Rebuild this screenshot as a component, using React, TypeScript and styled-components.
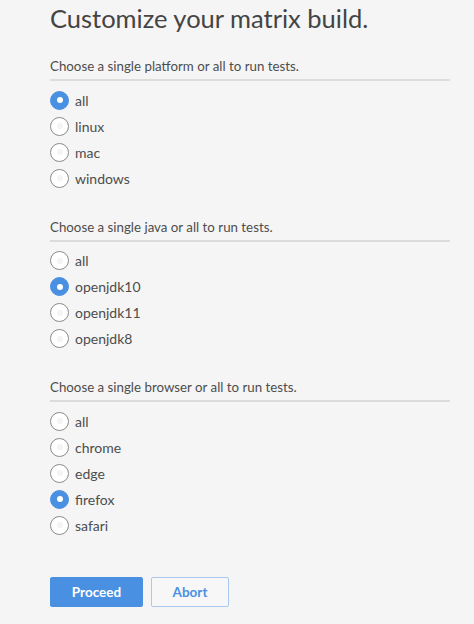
import React, { useState } from 'react';
import styled, { createGlobalStyle } from 'styled-components';

const GlobalStyle = createGlobalStyle`
  html, body {
    margin: 0;
    background: #f5f5f5;
    font-family: Lato, "Liberation Sans", sans-serif;
    color: #4d4d4d;
  }
`

const Page = styled.div`
  padding: 3px 24px 0 50px;
  width: 400px;
`
const Title = styled.h1`
  margin: 0 0 25px;
  font-size: 25.5px;
  font-weight: 400;
  line-height: 30px;
  color: #444;
`
const Section = styled.fieldset`
  border: 0;
  margin: 0 0 27.5px;
  padding: 0;
`
const Legend = styled.div`
  font-size: 13.3px;
  line-height: 16px;
  padding-bottom: 5px;
  border-bottom: 2px solid #dcdcdc;
  margin-bottom: 6px;
`
const Option = styled.label`
  display: flex;
  align-items: center;
  height: 26px;
  font-size: 14px;
  cursor: pointer;
`
const Dot = styled.span<{ $on: boolean }>`
  box-sizing: border-box;
  width: 19px;
  height: 19px;
  margin-right: 6px;
  border-radius: 50%;
  display: flex;
  align-items: center;
  justify-content: center;
  background: ${p => (p.$on ? '#4a90e2' : '#fff')};
  border: 1px solid ${p => (p.$on ? '#4a90e2' : '#8a8a8a')};
  &::after {
    content: '';
    width: 6px;
    height: 6px;
    border-radius: 50%;
    background: ${p => (p.$on ? '#fff' : '#f4f4f4')};
  }
`
const Actions = styled.div`
  display: flex;
  gap: 8px;
  padding-top: 11px;
`
const Button = styled.button<{ $primary?: boolean }>`
  box-sizing: border-box;
  height: 30px;
  padding: 0 20px;
  border-radius: 2px;
  font-family: inherit;
  font-size: 13.5px;
  font-weight: 700;
  cursor: pointer;
  background: ${p => (p.$primary ? '#4a90e2' : '#f7f7f7')};
  color: ${p => (p.$primary ? '#fff' : '#4a90e2')};
  border: 1px solid ${p => (p.$primary ? '#4a90e2' : '#a9c8ef')};
`

const groups = [
  { name: 'platform', options: ['all', 'linux', 'mac', 'windows'], initial: 'all' },
  { name: 'java', options: ['all', 'openjdk10', 'openjdk11', 'openjdk8'], initial: 'openjdk10' },
  { name: 'browser', options: ['all', 'chrome', 'edge', 'firefox', 'safari'], initial: 'firefox' },
]

function App() {
  const [picked, setPicked] = useState<Record<string, string>>(
    Object.fromEntries(groups.map(g => [g.name, g.initial]))
  );

  return (
    <Page>
      <GlobalStyle />
      <Title>Customize your matrix build.</Title>
      {groups.map(g => (
        <Section key={g.name}>
          <Legend>Choose a single {g.name} or all to run tests.</Legend>
          {g.options.map(o => (
            <Option key={o} onClick={() => setPicked({ ...picked, [g.name]: o })}>
              <Dot $on={picked[g.name] === o} />
              {o}
            </Option>
          ))}
        </Section>
      ))}
      <Actions>
        <Button $primary style={{ width: 93 }}>Proceed</Button>
        <Button style={{ width: 78 }}>Abort</Button>
      </Actions>
    </Page>
  )
}

export default App;
